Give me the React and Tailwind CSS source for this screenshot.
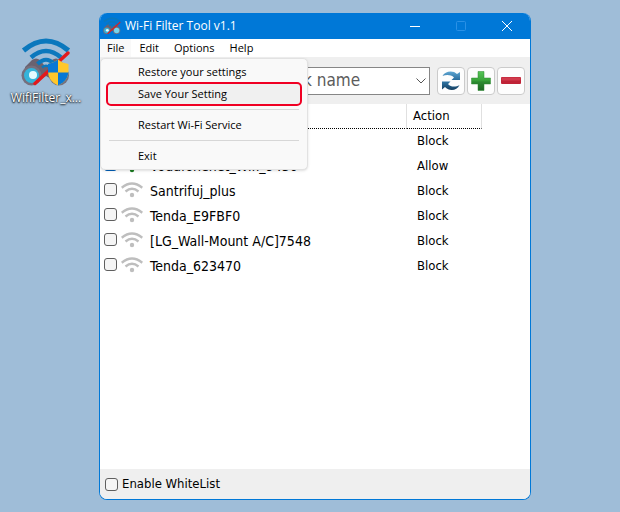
import React, { useState } from "react";

const networks = [
  { name: "", action: "Block", checked: false },
  { name: "Vodafonenet_Wifi_9430", action: "Allow", checked: true },
  { name: "Santrifuj_plus", action: "Block", checked: false },
  { name: "Tenda_E9FBF0", action: "Block", checked: false },
  { name: "[LG_Wall-Mount A/C]7548", action: "Block", checked: false },
  { name: "Tenda_623470", action: "Block", checked: false },
];

function AppLogo({ className, shield }) {
  return (
    <svg viewBox="0 0 50 50" className={className} aria-hidden="true">
      <path d="M4 29L11 22Q15 19 19 22L23 27H27L31 22Q35 19 39 22L47 31L44 42H32L25 38L18 42H4Z" fill="#6a6270" />
      <circle cx="10.5" cy="37.500" r="10" fill="#75707e" />
      <circle cx="10.5" cy="37.500" r="7.5" fill="#35b4da" />
      <circle cx="12" cy="37" r="4" fill="#e4fbff" />
      <circle cx="38" cy="37.500" r="10" fill="#75707e" />
      <circle cx="38" cy="37.500" r="7.5" fill="#74d4ee" />
      <g fill="none" stroke="#0b78bd">
        <path d="M2.500 12.500Q25 -6.500 47.500 12.500" strokeWidth="5" />
        <path d="M10 19.500Q25 6.500 40 19.500" strokeWidth="4.500" />
        <path d="M16.500 26Q25 17.500 33.500 26" strokeWidth="4" />
        <path d="M21 29.500Q25 26 29 29.500" strokeWidth="2.500" />
      </g>
      <path d="M14 45.500L47 15" stroke="#e3191c" strokeWidth="3.500" strokeLinecap="round" />
      {shield && (
        <g>
          <path d="M27 26Q33 25 37 21.500Q41 25 47.500 26V33Q47.500 43 37 47.500Q27 43 27 33Z" fill="#ffc72b" />
          <path d="M37 21.500V34.500H27V26Q33 25 37 21.500Z" fill="#0878d4" />
          <path d="M37 34.500H47.500Q46.500 43.500 37 47.500Z" fill="#0878d4" />
        </g>
      )}
    </svg>
  );
}

function WifiIcon({ className }) {
  return (
    <svg viewBox="0 0 22 16" className={className} aria-hidden="true">
      <g fill="none" stroke="currentColor" strokeWidth="2.400">
        <path d="M0.700 5.700Q11 -2.700 21.300 5.700" />
        <path d="M4.500 9.500Q11 4 17.500 9.500" />
      </g>
      <circle cx="11" cy="13" r="2.200" fill="currentColor" />
    </svg>
  );
}

function CheckBox({ className, ...props }) {
  return (
    <input
      type="checkbox"
      className={`size-[13px] shrink-0 appearance-none rounded-[3px] border border-[#5f5f5f] bg-[#f5f5f5] checked:border-[#005fb8] checked:bg-[#005fb8] ${className || ""}`}
      {...props}
    />
  );
}

function TitleBar() {
  return (
    <header className="flex h-[26px] shrink-0 items-stretch bg-[#0078d7] text-white">
      <div className="flex flex-1 items-center gap-1 pl-[3px]">
        <AppLogo className="size-[18px]" />
        <h1 className="font-[Open_Sans,sans-serif] text-[12px] leading-4">Wi-Fi Filter Tool v1.1</h1>
      </div>
      <button aria-label="Minimize" className="flex w-[46px] items-center justify-center">
        <svg viewBox="0 0 10 10" className="size-[10px]" stroke="currentColor">
          <path d="M0 5.500H10" />
        </svg>
      </button>
      <button aria-label="Maximize" disabled className="flex w-[46px] items-center justify-center text-[#2b91e6]">
        <svg viewBox="0 0 10 10" className="size-[10px]" fill="none" stroke="currentColor">
          <rect x="0.500" y="0.500" width="9" height="9" rx="1" />
        </svg>
      </button>
      <button aria-label="Close" className="flex w-[46px] items-center justify-center">
        <svg viewBox="0 0 10 10" className="size-[10px]" stroke="currentColor">
          <path d="M0 0L10 10M10 0L0 10" />
        </svg>
      </button>
    </header>
  );
}

function MenuItem({ children }) {
  return (
    <button role="menuitem" className="block h-[22px] w-full pl-[37px] text-left">
      {children}
    </button>
  );
}

function FileMenu() {
  return (
    <div
      role="menu"
      className="absolute top-full left-0 z-10 mt-px w-[208px] rounded-[5px] border border-[#e2e2e2] bg-[#f9f9f9] py-[2px] leading-[22px] shadow-sm"
    >
      <MenuItem>Restore your settings</MenuItem>
      <div className="mx-[6px] rounded-[4px] bg-[#f0f0f0] outline-2 -outline-offset-1 outline-[#f00023]">
        <button role="menuitem" className="block h-[22px] w-full pl-[31px] text-left">
          Save Your Setting
        </button>
      </div>
      <hr className="mx-2 my-1 border-[#d7d7d7]" />
      <MenuItem>Restart Wi-Fi Service</MenuItem>
      <hr className="mx-2 my-1 border-[#d7d7d7]" />
      <MenuItem>Exit</MenuItem>
    </div>
  );
}

function MenuBar() {
  return (
    <nav className="relative flex h-[18px] shrink-0 bg-white font-[Open_Sans,sans-serif] text-[11px] leading-[18px] text-black">
      <button className="bg-[#f9f9f9] px-[7px]">File</button>
      <button className="px-2">Edit</button>
      <button className="px-[7px]">Options</button>
      <button className="px-2">Help</button>
      <FileMenu />
    </nav>
  );
}

function ToolButton({ label, children }) {
  return (
    <button
      aria-label={label}
      className="flex size-7 shrink-0 items-center justify-center rounded-[4px] border border-[#cbcbcb] bg-[#fdfdfd]"
    >
      {children}
    </button>
  );
}

function Toolbar() {
  return (
    <div className="flex shrink-0 items-center gap-[2px] bg-[#efefef] pt-[10px] pr-[5px] pb-[9px] pl-[6px]">
      <div className="relative mr-[5px] flex-1">
        <select
          aria-label="Network name"
          className="h-7 w-full appearance-none border border-[#868686] bg-white pl-[141px] font-[DejaVu_Sans_Condensed,Noto_Sans,sans-serif] text-[17px] text-[#5c5c5c]"
        >
          <option>Network name</option>
        </select>
        <svg viewBox="0 0 10 6" className="pointer-events-none absolute top-[11px] right-1 h-[6px] w-[10px]" fill="none" stroke="#555">
          <path d="M0.500 0.500L5 5L9.500 0.500" />
        </svg>
      </div>
      <ToolButton label="Refresh">
        <svg viewBox="0 0 20 20" className="size-5">
          <defs>
            <linearGradient id="blue" x1="0" y1="0" x2="0" y2="1">
              <stop offset="0" stopColor="#5ea6d3" />
              <stop offset="1" stopColor="#2a6c9c" />
            </linearGradient>
            <linearGradient id="navy" x1="0" y1="0" x2="0" y2="1">
              <stop offset="0" stopColor="#2f76a6" />
              <stop offset="1" stopColor="#153f60" />
            </linearGradient>
          </defs>
          <path d="M1.500 5C4 0 12 -1 16 3L19 1V9H10.500L13 6.500C10 3.500 5 3.500 1.500 5Z" fill="url(#blue)" />
          <path d="M18.500 14C16 20 8 20.500 4 16L1 18.500V10.500H9.500L7 13C10 16.500 15 16 18.500 14Z" fill="url(#navy)" />
        </svg>
      </ToolButton>
      <ToolButton label="Add">
        <svg viewBox="0 0 20 20" className="size-5">
          <defs>
            <linearGradient id="green" x1="0" y1="0" x2="0" y2="1">
              <stop offset="0" stopColor="#55c457" />
              <stop offset="0.450" stopColor="#3aa53a" />
              <stop offset="0.550" stopColor="#2b8a2f" />
              <stop offset="1" stopColor="#1d6523" />
            </linearGradient>
          </defs>
          <path d="M7 0.500H13V7H19.500V13H13V19.500H7V13H0.500V7H7Z" fill="url(#green)" stroke="#2c8a30" strokeWidth="0.500" strokeLinejoin="round" />
        </svg>
      </ToolButton>
      <ToolButton label="Remove">
        <svg viewBox="0 0 20 20" className="size-5">
          <rect x="0" y="6" width="20" height="7" rx="1" fill="#bf2236" />
          <rect x="0.500" y="6.500" width="19" height="3" rx="1" fill="#d13a4c" />
        </svg>
      </ToolButton>
    </div>
  );
}

function NetworkList({ rows, onToggle }) {
  return (
    <div className="min-h-0 flex-1 overflow-hidden bg-white pr-12 font-[DejaVu_Sans_Condensed,Noto_Sans,sans-serif] text-[14px] leading-6 text-black">
      <table className="w-full table-fixed border-separate border-spacing-0">
        <thead>
          <tr className="h-[25px]">
            <th
              aria-label="Network"
              className="border-r border-b border-r-[#e0e0e0] border-b-black p-0 [border-bottom-style:dotted]"
            />
            <th className="w-[75px] border-r border-b border-r-[#e0e0e0] border-b-black p-0 pl-[6px] text-left text-[13px] font-normal [border-bottom-style:dotted]">
              Action
            </th>
          </tr>
        </thead>
        <tbody>
          {rows.map((row, i) => (
            <tr key={i} className="h-[25px]">
              <td className="p-0">
                <label className="flex h-[25px] items-start pl-1">
                  <CheckBox className="mt-1" checked={row.checked} onChange={() => onToggle(i)} />
                  <WifiIcon
                    className={`mt-[3px] ml-1 h-4 w-[22px] shrink-0 ${row.checked ? "text-[#1c7c22]" : "text-[#bebebe]"}`}
                  />
                  <span className="ml-[7px] whitespace-nowrap">{row.name}</span>
                </label>
              </td>
              <td className="p-0 pl-[10px] align-top text-[13px]">{row.action}</td>
            </tr>
          ))}
        </tbody>
      </table>
    </div>
  );
}

export default function App() {
  const [rows, setRows] = useState(networks);
  const [whiteList, setWhiteList] = useState(false);

  const toggle = (index) => {
    setRows(rows.map((r, i) => (i === index ? { ...r, checked: !r.checked } : r)));
  };

  return (
    <div className="flex h-screen min-h-[320px] bg-[#9fbdd8] pt-[13px] pr-[89px] pb-3">
      {/* Desktop shortcut */}
      <div className="flex w-[99px] shrink-0 flex-col items-center pt-[25px] pr-[7px]">
        <AppLogo className="size-[50px]" shield />
        <span className="mt-[2px] font-[Open_Sans,sans-serif] text-[12px] leading-4 text-white [text-shadow:0_1px_2px_#000,0_0_2px_#000]">
          WifiFilter_x...
        </span>
      </div>

      {/* App window */}
      <main className="flex min-w-0 flex-1 flex-col overflow-hidden rounded-lg border border-t-0 border-[#0078d7] bg-white">
        <TitleBar />
        <MenuBar />
        <Toolbar />
        <NetworkList rows={rows} onToggle={toggle} />
        <footer className="flex h-[30px] shrink-0 items-center bg-[#efefef] pl-[5px]">
          <label className="flex items-center gap-1 font-[DejaVu_Sans_Condensed,Noto_Sans,sans-serif] text-[13px] leading-6 text-black">
            <CheckBox checked={whiteList} onChange={() => setWhiteList(!whiteList)} />
            Enable WhiteList
          </label>
        </footer>
      </main>
    </div>
  );
}
